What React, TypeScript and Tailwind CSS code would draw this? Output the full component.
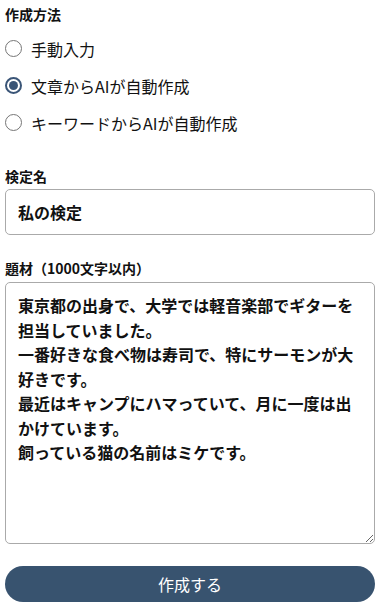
import { useState } from "react";

const font = { fontFamily: '"Noto Sans CJK JP", "Noto Sans", sans-serif' };

const methods = ["手動入力", "文章からAIが自動作成", "キーワードからAIが自動作成"];

const initialText =
  "東京都の出身で、大学では軽音楽部でギターを担当していました。\n一番好きな食べ物は寿司で、特にサーモンが大好きです。\n最近はキャンプにハマっていて、月に一度は出かけています。\n飼っている猫の名前はミケです。";

function Radio({ label, checked, onClick }: { label: string; checked: boolean; onClick: () => void }) {
  return (
    <button type="button" onClick={onClick} className="flex items-center h-[37px] gap-[9px] text-left">
      {checked ? (
        <span className="w-[17px] h-[17px] rounded-full border-2 border-[#3a5577] flex items-center justify-center">
          <span className="w-[9px] h-[9px] rounded-full bg-[#3a5577]" />
        </span>
      ) : (
        <span className="w-[17px] h-[17px] rounded-full border border-[#767676] bg-white" />
      )}
      <span className="text-[16px] text-[#111]">{label}</span>
    </button>
  );
}

export default function App() {
  const [method, setMethod] = useState(1);

  return (
    <div className="bg-white w-[382px] h-[610px] pl-[5px] pr-[7px] pt-[4px]" style={font}>
      <div className="text-[14px] font-bold leading-5 text-[#111]">作成方法</div>
      <div className="flex flex-col mt-[6px]">
        {methods.map((m, i) => (
          <Radio key={m} label={m} checked={method === i} onClick={() => setMethod(i)} />
        ))}
      </div>

      <div className="mt-[25px] text-[14px] font-bold leading-5 text-[#111]">検定名</div>
      <input
        defaultValue="私の検定"
        className="mt-[3px] w-full h-[46px] rounded-[5px] border border-[#aaaaaa] px-3 text-[16px] font-bold text-[#111] outline-none"
        style={font}
      />

      <div className="mt-[23px] text-[14px] font-bold leading-5 text-[#111]">題材（1000文字以内）</div>
      <textarea
        defaultValue={initialText}
        className="mt-[4px] block w-full h-[262px] rounded-[5px] border border-[#aaaaaa] px-3 pt-[10px] text-[16px] font-bold leading-[24.5px] text-[#111] outline-none"
        style={font}
      />

      <button
        type="button"
        className="mt-[22px] w-full h-[36px] rounded-full bg-[#38536f] text-white text-[16px]"
        style={font}
      >
        作成する
      </button>
    </div>
  );
}
